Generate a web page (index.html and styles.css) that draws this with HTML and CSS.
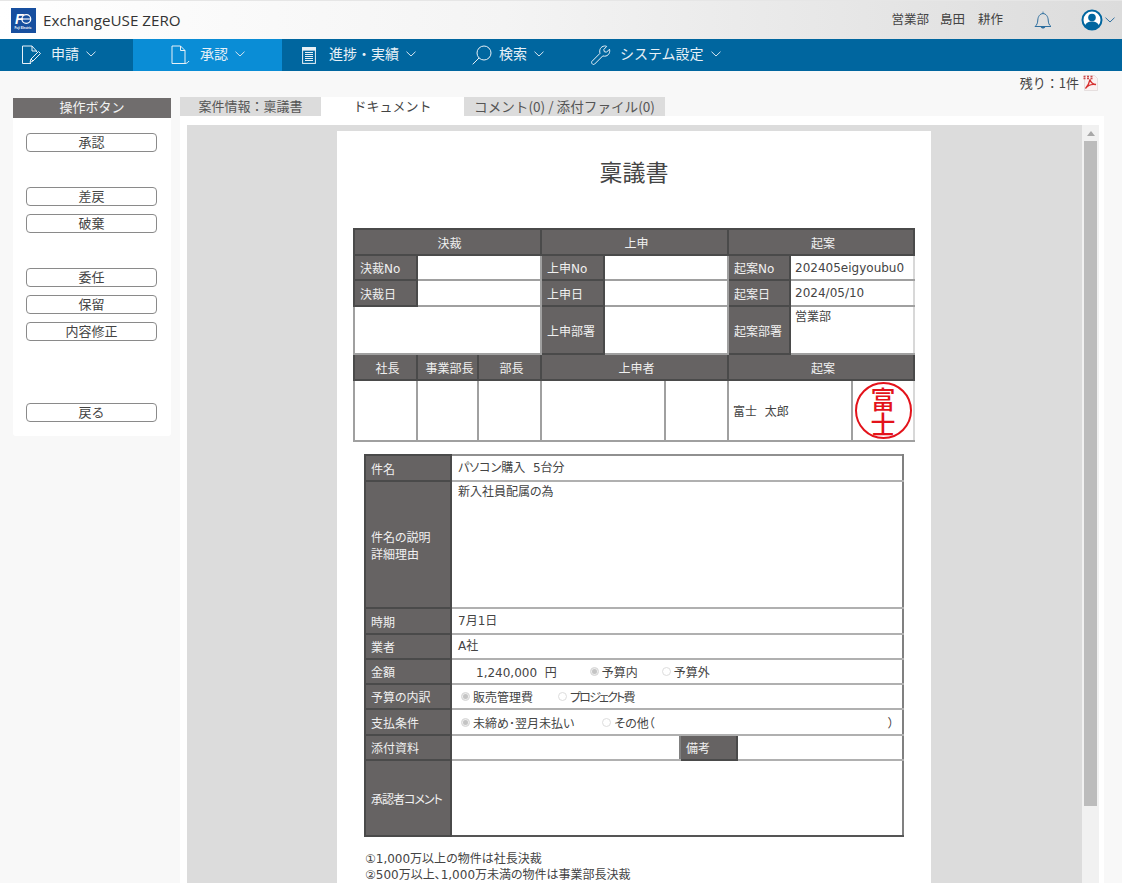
FILE: index.html
```html
<!DOCTYPE html>
<html lang="ja">
<head>
<meta charset="utf-8">
<title>ExchangeUSE ZERO</title>
<link rel="stylesheet" href="styles.css">
</head>
<body>
<header class="topbar">
  <div class="brand">
    <svg class="logo" viewBox="0 0 25 25" aria-hidden="true">
      <rect width="25" height="25" fill="#174f9f"/>
      <text x="4" y="15.5" class="logo-f">F</text>
      <circle cx="15.3" cy="11" r="4.4" fill="none" stroke="#fff" stroke-width="1.3"/>
      <path d="M10.5 11h9" stroke="#fff" stroke-width="1.1"/>
      <text x="3.5" y="21" class="logo-s">Fuji Electric</text>
    </svg>
    <span class="brand-name">ExchangeUSE ZERO</span>
  </div>
  <div class="account">
    <span class="user-dept">営業部</span>
    <span class="user-last">島田</span>
    <span class="user-first">耕作</span>
    <svg class="bell" viewBox="0 0 20 20" aria-hidden="true">
      <path d="M2 16.500c2-1.600 2.600-3.300 2.800-6.500C5 6.500 7 3.600 10 3.600s5 2.900 5.200 6.400c.2 3.200.8 4.900 2.800 6.500z" fill="none" stroke="#2f6f9f" stroke-width="1"/>
      <path d="M10 1.600v2M8 17c.2 1.500 3.800 1.500 4 0z" fill="#2f6f9f" stroke="#2f6f9f" stroke-width=".8"/>
    </svg>
    <svg class="avatar" viewBox="0 0 22 22" aria-hidden="true">
      <circle cx="11" cy="11" r="9.500" fill="#fff" stroke="#00669f" stroke-width="2"/>
      <circle cx="11" cy="8.500" r="3.800" fill="#00669f"/>
      <path d="M3.800 17c1.500-3.600 4-4.500 7.200-4.500s5.700.9 7.200 4.500c-1.800 2.200-4.300 3.500-7.200 3.500s-5.400-1.300-7.200-3.500z" fill="#00669f"/>
    </svg>
    <svg class="chev chev-dark" viewBox="0 0 10 6" aria-hidden="true"><path d="M.5.700 5 5 9.500.700"/></svg>
  </div>
</header>

<nav class="nav">
  <a class="nav-item n1">
    <svg class="ic ic-apply" viewBox="0 0 20 20" aria-hidden="true">
      <path d="M10 18.500H1.500V1h9.500l4.500 5v1"/><path d="M11 1v5h4.500"/>
      <path d="M9 17.500l1-3.500 7.500-7.500 2 2-7.500 7.500zM10 14l2 2"/>
    </svg>
    <span class="nav-label">申請</span>
    <svg class="chev" viewBox="0 0 10 6" aria-hidden="true"><path d="M.5.700 5 5 9.500.700"/></svg>
  </a>
  <a class="nav-item n2 active">
    <svg class="ic ic-doc" viewBox="0 0 19 20" aria-hidden="true">
      <path d="M1 1h8.500l4.500 4.500V18.500H1z"/><path d="M9.500 1v4.500H14"/><path d="M14 18.500c1.500 0 3-.8 4-2.500"/>
    </svg>
    <span class="nav-label">承認</span>
    <svg class="chev" viewBox="0 0 10 6" aria-hidden="true"><path d="M.5.700 5 5 9.500.700"/></svg>
  </a>
  <a class="nav-item n3">
    <svg class="ic ic-list" viewBox="0 0 14 17" aria-hidden="true">
      <rect x=".6" y=".6" width="12.800" height="15.800"/><rect x=".6" y=".6" width="12.800" height="2.500" class="ic-fill"/>
      <path d="M3 5.500h8M3 7.500h8M3 9.500h8M3 11.500h8M3 13.500h8"/>
    </svg>
    <span class="nav-label">進捗・実績</span>
    <svg class="chev" viewBox="0 0 10 6" aria-hidden="true"><path d="M.5.700 5 5 9.500.700"/></svg>
  </a>
  <a class="nav-item n4">
    <svg class="ic ic-search" viewBox="0 0 20 20" aria-hidden="true">
      <circle cx="12" cy="8" r="7"/><path d="M7 13 .7 19.300"/>
    </svg>
    <span class="nav-label">検索</span>
    <svg class="chev" viewBox="0 0 10 6" aria-hidden="true"><path d="M.5.700 5 5 9.500.700"/></svg>
  </a>
  <a class="nav-item n5">
    <svg class="ic ic-wrench" viewBox="0 0 20 20" aria-hidden="true">
      <path d="M.8 16.500 9 8.300C8 5 9.500 1.500 13.500 1c1 0 1.700.1 2.200.4L12.800 4.500l.5 2.200 2.200.5 3-3c.7 2.800-.3 5.800-3.500 6.800-1.200.3-2.300.2-3.200-.1L3.500 19.200c-.9.600-1.900.2-2.400-.5-.5-.7-.7-1.500-.3-2.200z"/>
    </svg>
    <span class="nav-label">システム設定</span>
    <svg class="chev" viewBox="0 0 10 6" aria-hidden="true"><path d="M.5.700 5 5 9.500.700"/></svg>
  </a>
</nav>

<div class="status">
  <span class="remain">残り：1件</span>
  <svg class="pdf" viewBox="0 0 16 16" aria-hidden="true">
    <path d="M2.500.5h10l3 3v12h-13z" fill="#fbf1f1" stroke="#d9d0d0" stroke-width=".6"/>
    <path d="M1.500 1.500h2M5 1.500h2M8.500 1.500h2M1.500 3.500h2M5 3.500h2M8.500 3.500h2" stroke="#c94a4a" stroke-width="1.400"/>
    <path d="M8 4.500c-.6 3-2.200 6.500-4.500 9C5.500 10.500 10 8.800 14 9.500 11 9.500 8.500 7 8 4.500z" fill="none" stroke="#d63030" stroke-width="1.300"/>
  </svg>
</div>

<div class="workspace">
  <aside class="side">
    <div class="side-title">操作ボタン</div>
    <div class="side-buttons">
      <button class="op" type="button">承認</button>
      <button class="op sep" type="button">差戻</button>
      <button class="op" type="button">破棄</button>
      <button class="op sep" type="button">委任</button>
      <button class="op" type="button">保留</button>
      <button class="op" type="button">内容修正</button>
      <button class="op sep-lg" type="button">戻る</button>
    </div>
  </aside>

  <main class="main">
    <div class="tabs">
      <div class="tab t1">案件情報：稟議書</div>
      <div class="tab t2 current">ドキュメント</div>
      <div class="tab t3">コメント(0) / 添付ファイル(0)</div>
    </div>
    <div class="panel">
      <div class="viewer">
        <article class="paper">
          <h1 class="doc-title">稟議書</h1>
          <table class="approval">
            <colgroup>
              <col class="c63"><col class="c61"><col class="c63"><col class="c63"><col class="c61"><col class="c63"><col class="c62"><col class="c62"><col class="c62">
            </colgroup>
            <tr class="h26">
              <th colspan="3" class="center">決裁</th><th colspan="3" class="center">上申</th><th colspan="3" class="center">起案</th>
            </tr>
            <tr class="h25">
              <th>決裁No</th><td colspan="2"></td><th>上申No</th><td colspan="2"></td><th>起案No</th><td colspan="2">202405eigyoubu0</td>
            </tr>
            <tr class="h26">
              <th>決裁日</th><td colspan="2"></td><th>上申日</th><td colspan="2"></td><th>起案日</th><td colspan="2">2024/05/10</td>
            </tr>
            <tr class="h48">
              <td colspan="3"></td><th>上申部署</th><td colspan="2"></td><th>起案部署</th><td colspan="2" class="top">営業部</td>
            </tr>
            <tr class="h26">
              <th class="center">社長</th><th class="center">事業部長</th><th class="center">部長</th><th colspan="3" class="center">上申者</th><th colspan="3" class="center">起案</th>
            </tr>
            <tr class="h61">
              <td></td><td></td><td></td><td colspan="2"></td><td></td><td colspan="2">富士&nbsp;&nbsp;太郎</td>
              <td class="stamp-cell"><div class="stamp"><span>富</span><span>士</span></div></td>
            </tr>
          </table>

          <table class="request">
            <colgroup><col class="l86"><col class="c229"><col class="c57"><col class="c166"></colgroup>
            <tr class="h26"><th>件名</th><td colspan="3" class="up">パソコン購入&nbsp;&nbsp;5台分</td></tr>
            <tr class="h127"><th>件名の説明<br>詳細理由</th><td colspan="3" class="top">新入社員配属の為</td></tr>
            <tr class="h26"><th>時期</th><td colspan="3" class="up">7月1日</td></tr>
            <tr class="h25"><th>業者</th><td colspan="3" class="up">A社</td></tr>
            <tr class="h25"><th>金額</th><td colspan="3">
              <div class="line"><span class="amount">1,240,000&nbsp;&nbsp;円</span><span class="radio on g1"></span><span>予算内</span><span class="radio g2"></span><span>予算外</span></div>
            </td></tr>
            <tr class="h25"><th>予算の内訳</th><td colspan="3">
              <div class="line"><span class="radio on g0"></span><span>販売管理費</span><span class="radio g3"></span><span class="tighter">プロジェクト費</span></div>
            </td></tr>
            <tr class="h26"><th>支払条件</th><td colspan="3">
              <div class="line"><span class="radio on g0"></span><span>未締め･翌月未払い</span><span class="radio g4"></span><span>その他（</span><span class="close">）</span></div>
            </td></tr>
            <tr class="h25"><th>添付資料</th><td></td><th class="dark-cell">備考</th><td></td></tr>
            <tr class="h76"><th class="tight">承認者コメント</th><td colspan="3"></td></tr>
          </table>

          <p class="note">①1,000万以上の物件は社長決裁<br>②500万以上、1,000万未満の物件は事業部長決裁</p>
        </article>
      </div>
      <div class="scrollbar">
        <span class="arrow"></span>
        <span class="thumb"></span>
      </div>
    </div>
  </main>
</div>
</body>
</html>
```

FILE: styles.css
```css
* { box-sizing: border-box; }
html, body { height: 100%; }
body {
  margin: 0;
  height: 883px;
  overflow: hidden;
  background: #f8f8f8;
  color: #444;
  font-family: "DejaVu Sans", "Noto Sans CJK JP", sans-serif;
  font-size: 12px;
  display: flex;
  flex-direction: column;
}

/* top bar */
.topbar {
  height: 39px;
  flex: none;
  display: flex;
  align-items: center;
  justify-content: space-between;
  background: linear-gradient(90deg, #fff 0%, #f4f4f4 45%, #dcdcdc 100%);
  border-top: 1px solid #e6e6e6;
}
.brand { display: flex; align-items: center; padding-left: 11px; }
.logo { width: 25px; height: 25px; }
.logo-f { font: italic 700 14px "Liberation Sans", sans-serif; fill: #fff; }
.logo-s { font: 700 3px "Liberation Sans", sans-serif; fill: #fff; }
.brand-name {
  margin-left: 7px;
  font-family: "Open Sans", sans-serif;
  font-size: 15.2px;
  color: #333;
}
.account {
  display: flex;
  align-items: center;
  padding-right: 7px;
  font-family: "Noto Sans CJK JP", sans-serif;
  font-size: 12.5px;
}
.user-dept, .user-last, .user-first { margin-top: -4px; }
.user-last { margin-left: 11px; }
.user-first { margin-left: 13px; }
.bell { width: 20px; height: 20px; margin-left: 30px; }
.avatar { width: 22px; height: 22px; margin-left: 28px; }
.account .chev { margin-left: 2px; }

/* navigation */
.nav {
  height: 32px;
  flex: none;
  display: flex;
  background: #00669f;
  color: #e8f1f7;
  font-family: "Noto Sans CJK JP", sans-serif;
  font-size: 14px;
}
.nav-item { display: flex; align-items: center; height: 32px; }
.nav-item.active { background: #0a8dd6; }
.nav-label { margin-top: -4px; }
.n1 { width: 133px; padding-left: 21px; }
.n2 { width: 149px; padding-left: 38px; }
.n3 { width: 161px; padding-left: 20px; }
.n4 { width: 125px; padding-left: 29px; }
.n5 { padding-left: 23px; }
.ic { fill: none; stroke: #e8f1f7; stroke-width: 1; flex: none; }
.ic-fill { fill: #e8f1f7; }
.ic-apply { width: 20px; height: 20px; margin-right: 10px; }
.ic-doc { width: 19px; height: 20px; margin-right: 10px; }
.ic-list { width: 14px; height: 17px; margin-right: 13px; }
.ic-search { width: 20px; height: 20px; margin-right: 7px; }
.ic-wrench { width: 20px; height: 20px; margin-right: 9px; }
.chev {
  width: 10px;
  height: 6px;
  margin-left: 7px;
  fill: none;
  stroke: #d5e5ef;
  stroke-width: 1;
  flex: none;
}
.nav .chev { margin-top: -2px; }
.chev-dark { stroke: #2f6f9f; }

/* remaining count */
.status {
  height: 26px;
  flex: none;
  display: flex;
  align-items: center;
  justify-content: flex-end;
  padding: 0 24px 2px 0;
  font-family: "Noto Sans CJK JP", sans-serif;
  font-size: 13px;
}
.remain { margin-top: -2px; }
.pdf { width: 16px; height: 16px; margin-left: 3px; }

/* workspace */
.workspace { flex: 1; min-height: 0; display: flex; align-items: flex-start; }
.side {
  width: 158px;
  margin: 1px 0 0 13px;
  background: #fff;
  border-radius: 0 0 3px 3px;
}
.side-title {
  height: 20px;
  line-height: 18px;
  background: #706d6d;
  color: #f2f2f2;
  text-align: center;
  font-family: "Noto Sans CJK JP", sans-serif;
  font-size: 13px;
}
.side-buttons { display: flex; flex-direction: column; gap: 8px; padding: 15px 14px 14px 13px; }
.op {
  height: 19px;
  padding: 0 0 2px;
  border: 1px solid #8a8a8a;
  border-radius: 4px;
  background: #fff;
  color: #444;
  font-family: "Noto Sans CJK JP", sans-serif;
  font-size: 13px;
  line-height: 15px;
}
.sep { margin-top: 27px; }
.sep-lg { margin-top: 54px; }

.main { width: 924px; margin-left: 9px; height: 786px; display: flex; flex-direction: column; }
.tabs { display: flex; height: 19px; flex: none; font-family: "Noto Sans CJK JP", sans-serif; font-size: 13px; }
.tab { background: #dcdcdc; text-align: center; line-height: 18px; color: #555; }
.tab.current { background: #fff; color: #444; }
.t1 { width: 141px; }
.t2 { width: 143px; }
.t3 { width: 201px; font-size: 13.6px; }
.panel { flex: 1; min-height: 0; background: #fff; padding: 9px 5px 0 7px; display: flex; }
.viewer { width: 895px; background: #dcdcdc; overflow: hidden; padding-top: 6px; }
.scrollbar { width: 17px; background: #f1f1f1; display: flex; flex-direction: column; align-items: center; }
.arrow {
  margin-top: 6px;
  width: 0;
  height: 0;
  border-left: 4px solid transparent;
  border-right: 4px solid transparent;
  border-bottom: 5px solid #a8a8a8;
}
.thumb { width: 13px; height: 665px; margin-top: 5px; background: #bcbcbc; }

/* paper */
.paper {
  width: 594px;
  margin-left: 150px;
  height: 800px;
  background: #fff;
  padding: 26px 0 0 16px;
  font-feature-settings: "palt";
}
.doc-title {
  margin: 0 16px 0 0;
  height: 71px;
  line-height: 28px;
  text-align: center;
  font-family: "Noto Sans CJK JP", sans-serif;
  font-size: 23px;
  font-weight: 400;
  color: #444;
  font-feature-settings: normal;
}
table { border-collapse: collapse; table-layout: fixed; }
th, td { padding: 0 4px; font-weight: 400; text-align: left; }
th {
  background: #666363;
  color: #f0f0f0;
  border: 2px solid #4a4a4a;
  padding-left: 5px;
}
td { border: 2px solid #a0a0a0; background: #fff; }
th.center { text-align: center; padding: 0 2px 0 6px; }
td.top { vertical-align: top; }

.approval { width: 560px; }
.approval td:last-child { border-right-color: #d8d8d8; }
.c63 { width: 63px; }
.c61 { width: 61px; }
.c62 { width: 62px; }
.h25 { height: 25px; }
.h26 { height: 26px; }
.h48 { height: 48px; }
.h61 { height: 61px; }
.h76 { height: 76px; }
.h127 { height: 127px; }
.stamp-cell { padding: 0; }
.stamp {
  width: 57px;
  height: 57px;
  margin: 0 auto;
  border: 2px solid #e3131b;
  border-radius: 50%;
  display: flex;
  flex-direction: column;
  align-items: center;
  justify-content: center;
  color: #e3131b;
  font-family: "Noto Sans CJK JP", sans-serif;
  font-size: 25px;
  font-weight: 500;
  line-height: 25px;
}

.request { width: 538px; margin: 12px 0 0 11px; }
.l86 { width: 86px; }
.c229 { width: 229px; }
.c57 { width: 57px; }
.c166 { width: 166px; }
.request td { padding-left: 6px; border-color: #b0b0b0; border-right-color: #808080; }
.request tr:first-child td { border-top-color: #909090; }
.request tr:last-child td { border-bottom-color: #555; }
.request td.up { padding-bottom: 4px; }
.tight { letter-spacing: -1px; white-space: nowrap; }
.tighter { letter-spacing: -1.8px; white-space: nowrap; }
.line { display: flex; align-items: center; position: relative; }
.amount { margin-left: 18px; }
.radio {
  width: 9px;
  height: 9px;
  margin-right: 3px;
  border-radius: 50%;
  border: 1px solid #ddd;
  background: #fff;
  flex: none;
}
.radio.on { background: #c4c4c4; box-shadow: inset 0 0 0 1px #eee; }
.g0 { margin-left: 3px; }
.g1 { margin-left: 33px; }
.g2 { margin-left: 24px; }
.g3 { margin-left: 25px; }
.g4 { margin-left: 28px; }
.close { position: absolute; right: 4px; }
.note {
  margin: 14px 0 0 12px;
  line-height: 16px;
}
```
